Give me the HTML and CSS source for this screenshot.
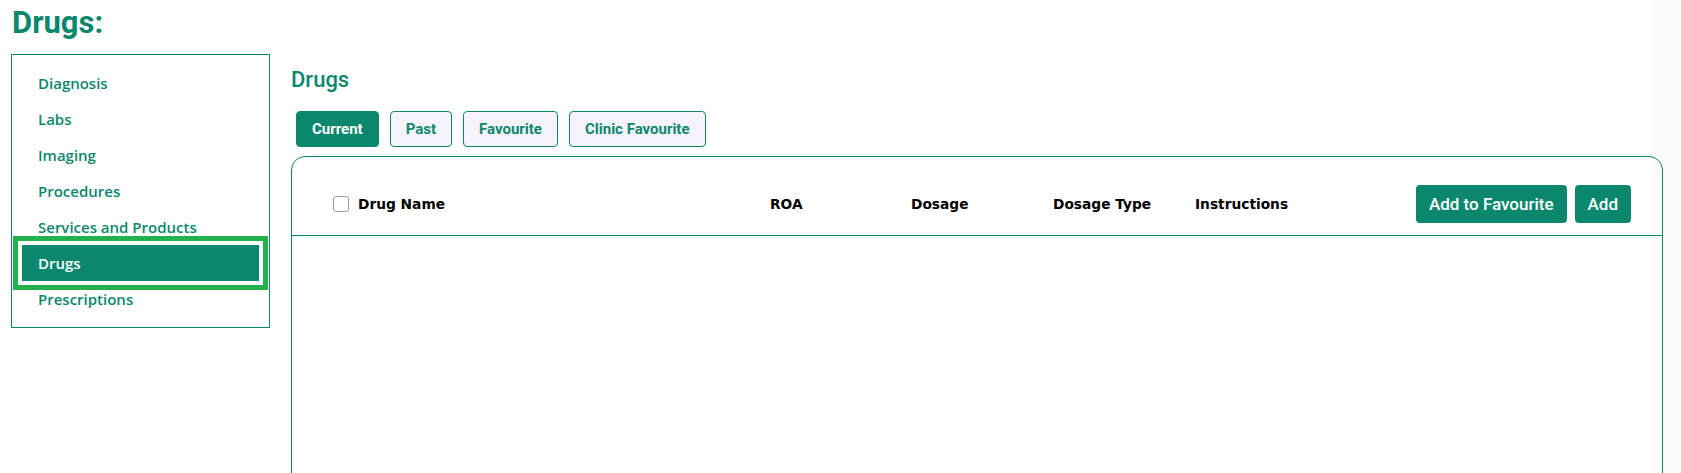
FILE: index.html
```html
<!DOCTYPE html>
<html>
<head>
    <title>Drugs</title>
    <link rel="stylesheet" href="styles.css">
</head>
<body>
    <div class="page">
        <h1 class="page-title">Drugs:</h1>

        <div class="layout">
            <nav class="side-menu">
                <a class="side-item">Diagnosis</a>
                <a class="side-item">Labs</a>
                <a class="side-item">Imaging</a>
                <a class="side-item">Procedures</a>
                <a class="side-item">Services and Products</a>
                <a class="side-item active">Drugs</a>
                <a class="side-item">Prescriptions</a>
            </nav>

            <main class="content">
                <h2 class="section-title">Drugs</h2>

                <div class="tabs">
                    <button class="tab active">Current</button>
                    <button class="tab">Past</button>
                    <button class="tab">Favourite</button>
                    <button class="tab">Clinic Favourite</button>
                </div>

                <div class="table-card">
                    <div class="table-head">
                        <label class="col col-name"><input type="checkbox" class="check">Drug Name</label>
                        <div class="col">ROA</div>
                        <div class="col">Dosage</div>
                        <div class="col">Dosage Type</div>
                        <div class="col">Instructions</div>
                        <div class="head-actions">
                            <button class="btn">Add to Favourite</button>
                            <button class="btn">Add</button>
                        </div>
                    </div>
                    <div class="table-body"></div>
                </div>
            </main>
        </div>
    </div>
</body>
</html>
```

FILE: styles.css
```css
:root {
    --teal: #0b876d;
    --ring: #22b14c;
    --tab-bg: #f6f3fd;
}

html {
    background: linear-gradient(to right, #fff 1653px, #fbfbfb 1653px);
    overflow: hidden;
}

body {
    margin: 0;
    font-family: Roboto, "Liberation Sans", sans-serif;
}

.page {
    padding: 5px 18px 0 11px;
}

.page-title {
    margin: 0;
    padding-left: 1px;
    font-size: 31px;
    line-height: 36px;
    font-weight: 700;
    color: var(--teal);
}

.layout {
    display: flex;
    align-items: flex-start;
    gap: 21px;
    margin-top: 13px;
}

/* left menu */
.side-menu {
    width: 259px;
    box-sizing: border-box;
    border: 1px solid var(--teal);
    padding: 10px;
    display: flex;
    flex-direction: column;
}

.side-item {
    height: 36px;
    display: flex;
    align-items: center;
    padding-left: 16px;
    font-family: "Open Sans", sans-serif;
    font-size: 15px;
    font-weight: 600;
    color: var(--teal);
    cursor: pointer;
}

.side-item.active {
    background: var(--teal);
    color: white;
    outline: 5px solid var(--ring);
    outline-offset: 4px;
}

/* right side */
.content {
    flex: 1;
    padding-top: 12px;
}

.section-title {
    margin: 0;
    font-size: 22px;
    line-height: 28px;
    font-weight: 500;
    color: var(--teal);
}

.tabs {
    display: flex;
    gap: 11px;
    margin-top: 17px;
    padding-left: 5px;
}

.tab {
    height: 36px;
    padding: 0 15px;
    border: 1px solid var(--teal);
    border-radius: 4px;
    background: var(--tab-bg);
    color: var(--teal);
    font-family: Roboto, sans-serif;
    font-size: 15px;
    font-weight: 700;
    cursor: pointer;
}

.tab.active {
    background: var(--teal);
    color: white;
}

.table-card {
    margin-top: 9px;
    border: 1px solid var(--teal);
    border-radius: 14px;
    min-height: 400px;
}

.table-head {
    display: grid;
    grid-template-columns: 437px 141px 142px 142px 1fr auto;
    align-items: center;
    padding: 28px 31px 12px 41px;
    border-bottom: 1px solid var(--teal);
}

.col {
    font-family: "DejaVu Sans", sans-serif;
    font-size: 13.75px;
    font-weight: 700;
    color: #000;
}

.col-name {
    display: flex;
    align-items: center;
}

.check {
    appearance: none;
    width: 16px;
    height: 16px;
    margin: 0 9px 0 0;
    border: 1px solid #9c9c9c;
    border-radius: 3px;
    background: white;
}

.head-actions {
    display: flex;
    gap: 8px;
}

.btn {
    height: 38px;
    padding: 0 13px;
    border: none;
    border-radius: 4px;
    background: var(--teal);
    color: white;
    font-family: Roboto, sans-serif;
    font-size: 17px;
    font-weight: 500;
    cursor: pointer;
}
```
